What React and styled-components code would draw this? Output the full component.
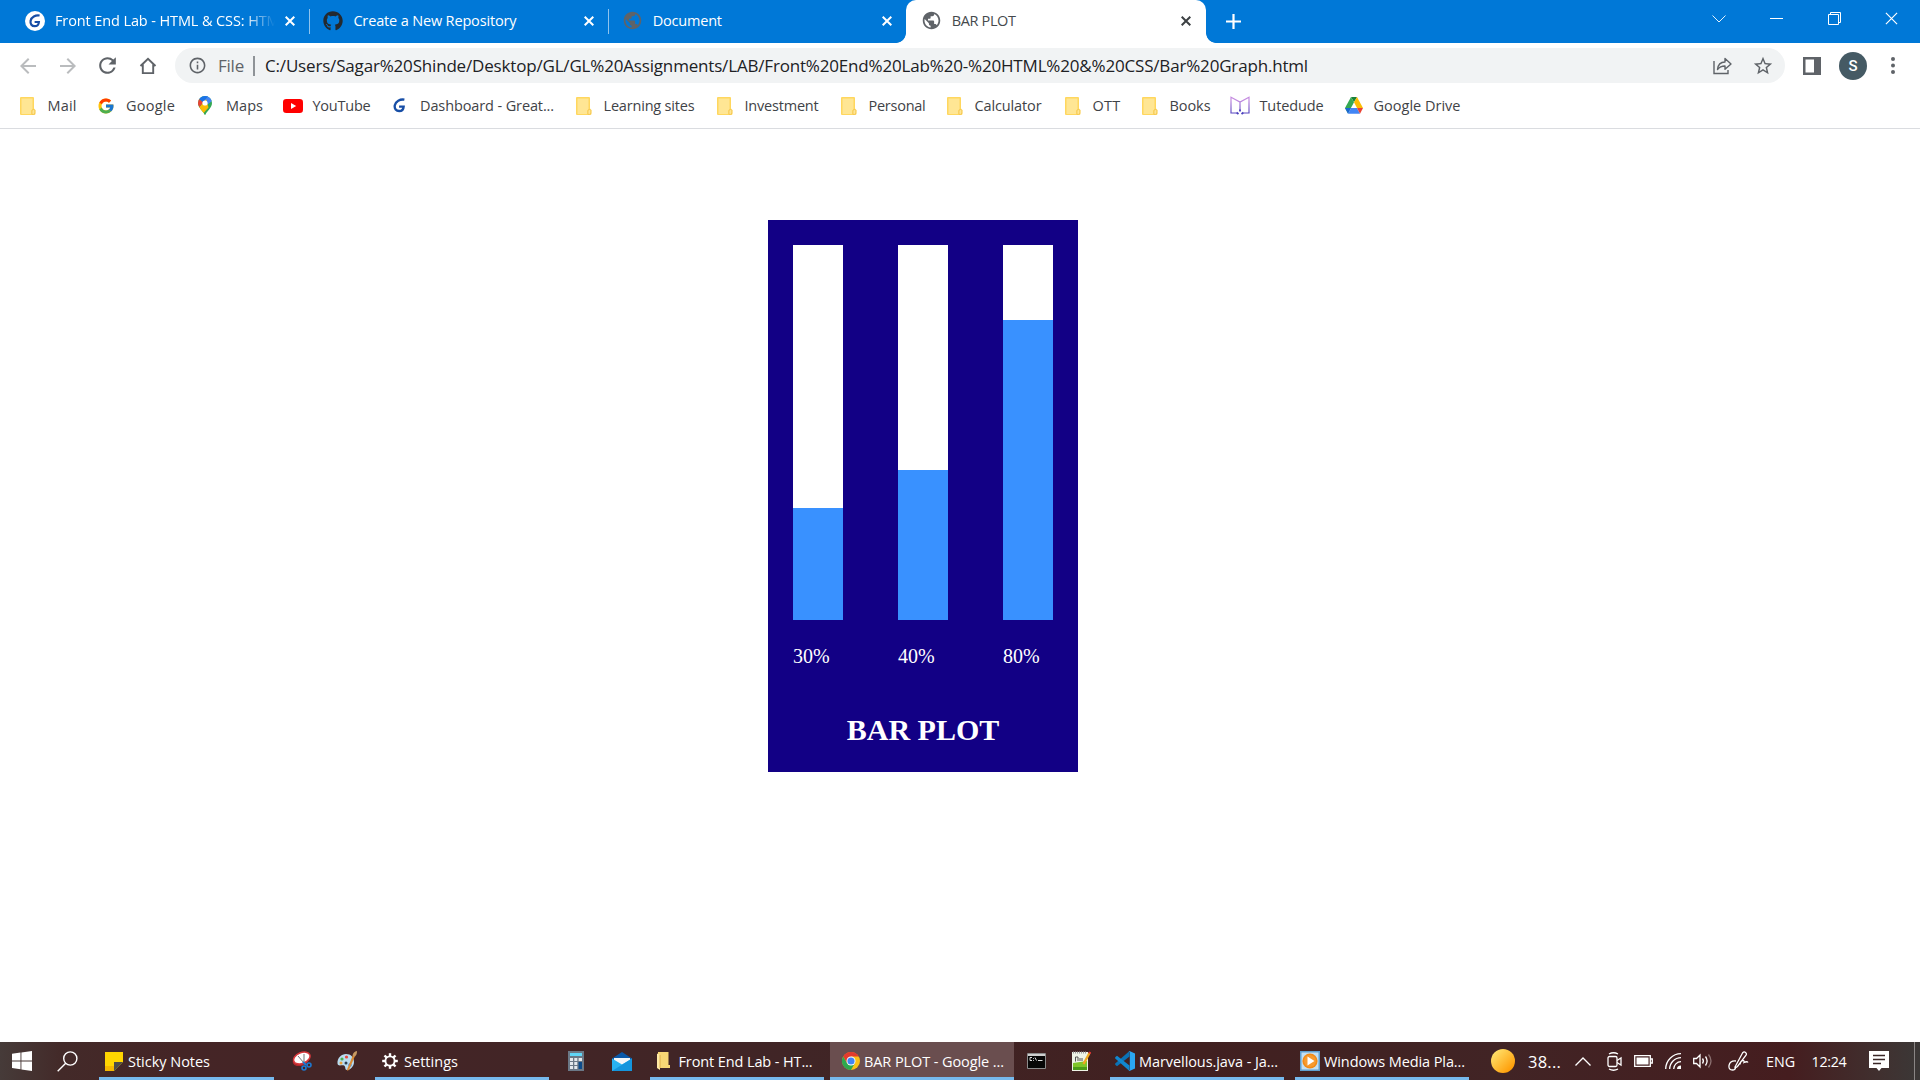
import React, { useLayoutEffect, useRef, useState } from "react";
import styled, { createGlobalStyle, css } from "styled-components";
import { FcGoogle } from "react-icons/fc";
import { FaGithub } from "react-icons/fa";
import { MdPublic, MdArrowBack, MdArrowForward, MdRefresh, MdInfoOutline, MdStarBorder } from "react-icons/md";

const Global = createGlobalStyle`
  * { box-sizing: border-box; }
  html, body { margin: 0; background: #fff; overflow: hidden; }
  svg { display: block; flex: none; }
`;

const Screen = styled.div`
  width: 1920px;
  height: 1080px;
  display: flex;
  flex-direction: column;
  font-family: "Open Sans", "Noto Sans", sans-serif;
  font-stretch: 92%;
  background: #fff;
`;

const Label = styled.span`
  flex: none;
  display: block;
  width: ${(p) => p.$w}px;
  margin-left: ${(p) => p.$ml || 0}px;
  font-size: ${(p) => p.$size || 14.5}px;
  line-height: 20px;
  white-space: nowrap;
  color: ${(p) => p.$color || "inherit"};
`;

/* Spreads the letter spacing so the text fills its column exactly. */
function Fit({ w, children, ...rest }) {
  const ref = useRef(null);
  const [track, setTrack] = useState(0);
  useLayoutEffect(() => {
    const range = document.createRange();
    range.selectNodeContents(ref.current);
    const natural = range.getBoundingClientRect().width - track * children.length;
    setTrack((w - natural) / children.length);
  }, [w, children]);
  return (
    <Label ref={ref} $w={w} {...rest} style={{ letterSpacing: `${track}px` }}>
      {children}
    </Label>
  );
}

/* ---------- Tab strip ---------- */
const TabStrip = styled.header`
  height: 43px;
  flex: none;
  display: flex;
  padding-left: 11px;
  background: #0078d7;
  color: #fff;
`;

const Tab = styled.div`
  position: relative;
  width: 298.4px;
  height: 43px;
  flex: none;
  display: flex;
  align-items: center;
  padding: 0 14px 2px 14px;
  ${(p) => p.$active && css`
    width: 300px;
    background: #fff;
    color: #45494d;
    border-radius: 10px 10px 0 0;
    padding: 0 15px 2px 14.5px;
    &::before, &::after {
      content: "";
      position: absolute;
      bottom: 0;
      width: 10px;
      height: 10px;
    }
    &::before { left: -10px; background: radial-gradient(circle at 0 0, transparent 9.5px, #fff 10.2px); }
    &::after { right: -10px; background: radial-gradient(circle at 100% 0, transparent 9.5px, #fff 10.2px); }
  `}
`;

const TabTitle = styled.div`
  flex: 1;
  min-width: 0;
  margin-left: 10px;
  overflow: hidden;
  ${(p) => p.$fade && css`
    margin-right: 10px;
    mask-image: linear-gradient(90deg, #000 86%, transparent 100%);
  `}
`;

const Divider = styled.i`
  width: 1px;
  height: 25px;
  margin-top: 9px;
  margin-right: -1px;
  flex: none;
  background: #8fc4ee;
`;

const NewTab = styled.div`
  width: 40px;
  margin-left: 7px;
  display: flex;
  align-items: center;
  justify-content: center;
`;

const WindowButtons = styled.div`
  margin-left: auto;
  display: flex;
  height: 37px;
`;

const WindowButton = styled.div`
  width: 57.3px;
  display: flex;
  align-items: center;
  justify-content: center;
`;

/* ---------- Toolbar ---------- */
const Toolbar = styled.div`
  height: 45px;
  flex: none;
  display: flex;
  align-items: center;
  padding-left: 7.5px;
  color: #5f6368;
`;

const ToolButton = styled.div`
  width: ${(p) => p.$w || 40}px;
  height: 40px;
  flex: none;
  display: flex;
  align-items: center;
  justify-content: center;
  color: ${(p) => (p.$off ? "#babcbe" : "#5f6368")};
`;

const Omnibox = styled.div`
  width: 1610px;
  height: 35px;
  flex: none;
  margin-left: 7.5px;
  border-radius: 18px;
  background: #f1f3f4;
  display: flex;
  align-items: center;
  padding: 0 11px 0 13px;
`;

const Pipe = styled.i`
  width: 1.5px;
  height: 20px;
  margin: 0 10.5px 0 9px;
  background: #8f9397;
`;

const OmniActions = styled.div`
  margin-left: auto;
  display: flex;
  align-items: center;
  gap: 20px;
`;

const Avatar = styled.div`
  width: 28px;
  height: 28px;
  flex: none;
  border-radius: 50%;
  background: #455a64;
  color: #fff;
  display: flex;
  align-items: center;
  justify-content: center;
  font: 500 15px/28px Roboto, sans-serif;
`;

/* ---------- Bookmarks ---------- */
const Bookmarks = styled.nav`
  height: 41px;
  flex: none;
  display: flex;
  align-items: center;
  padding: 0 0 5px 18px;
  border-bottom: 1px solid #dadce0;
  color: #3f4347;
`;

const Bookmark = styled.div`
  width: ${(p) => p.$w}px;
  height: 24px;
  flex: none;
  display: flex;
  align-items: center;
`;

const BookmarkIcon = styled.span`
  width: 20px;
  display: flex;
  justify-content: center;
`;

/* ---------- Page ---------- */
const Page = styled.main`
  flex: 1;
  padding: 91px 0 0 768px;
  font-family: "Liberation Serif", "Times New Roman", serif;
`;

const Card = styled.section`
  width: 310px;
  height: 552px;
  padding: 25px;
  background: #120085;
  color: #fff;
`;

const Plot = styled.div`
  display: flex;
  justify-content: space-between;
`;

const Column = styled.div`
  width: 50px;
`;

const Track = styled.div`
  height: 375px;
  display: flex;
  align-items: flex-end;
  background: #fff;
`;

const Fill = styled.div`
  width: 100%;
  height: ${(p) => p.$value}%;
  background: #3991ff;
`;

const Percent = styled.p`
  margin: 25px 0 0;
  font-size: 20px;
  line-height: 23px;
`;

const PlotTitle = styled.h1`
  margin: 45px 0 0;
  text-align: center;
  font-size: 30px;
  line-height: 34px;
  font-weight: bold;
`;

/* ---------- Taskbar ---------- */
const Taskbar = styled.footer`
  height: 38px;
  flex: none;
  display: flex;
  color: #fff;
  background: linear-gradient(90deg, #463b39 0, #432a29 60px, #452526 180px, #402526 800px, #412020 1200px, #412425 1500px, #451d1f 1790px, #40302f 1880px, #3b3837 1920px);
  ${Label} {
    padding-top: 1px;
    line-height: 21px;
  }
`;

const Slot = styled.div`
  width: ${(p) => p.$w}px;
  height: 38px;
  flex: none;
  display: flex;
  align-items: center;
  justify-content: center;
`;

const TaskWindow = styled.div`
  width: ${(p) => p.$w || 174}px;
  height: 38px;
  margin-left: ${(p) => p.$ml || 0}px;
  padding-left: ${(p) => p.$pad || 6}px;
  flex: none;
  display: flex;
  align-items: center;
  background: ${(p) => (p.$active ? "#6a4e4f" : "transparent")};
  box-shadow: inset 0 -3px #76b9ed;
`;

const Tray = styled.div`
  flex: 1;
  display: flex;
  align-items: center;
  padding-left: 22px;
`;

const ShowDesktop = styled.i`
  width: 1px;
  height: 38px;
  margin-left: auto;
  margin-right: 5px;
  background: #8a8685;
`;

/* ---------- Icons ---------- */
const Cross = ({ size = 10, width = 2, color = "currentColor" }) => (
  <svg width={size} height={size} viewBox="0 0 10 10" stroke={color} strokeWidth={width} fill="none">
    <path d="M.7.7l8.6 8.6M9.3.7L.7 9.3" />
  </svg>
);

const GMark = ({ size = 20, disc }) => (
  <svg width={size} height={size} viewBox="0 0 20 20" fill="none">
    {disc && <circle cx="10" cy="10" r="10" fill="#fff" />}
    <g transform={disc ? "" : "translate(-4.2 -4.2) scale(1.42)"}>
      <path d="M14.6 4.5C10.5 3.8 6.3 6 5.6 9.8c-.6 3.2 1.3 5.4 4.1 5.4 2.5 0 4-1.600 4.200-4.200H9.600" stroke="#174ea6" strokeWidth="2.200" />
    </g>
  </svg>
);

const FolderNote = () => (
  <svg width="16" height="18" viewBox="0 0 16 18">
    <path d="M1 0h12q1 0 1 1v10.5l1.5 1.5v3.5q0 1.500-1.500 1.500H1q-1 0-1-1V1q0-1 1-1z" fill="#ffd75e" />
    <path d="M1.500 1.500h11V12l-1.200 1.500v3.500H1.500z" fill="#ffe694" />
    <path d="M12 17.400v-3.400q0-1.500 1.200-1.500t1.600 1v2.500q0 1.400-1.400 1.400z" fill="#ffe694" stroke="#eebb3d" strokeWidth=".6" />
  </svg>
);

const MapsPin = () => (
  <svg width="14" height="19" viewBox="0 0 14 19">
    <defs>
      <clipPath id="pin"><path d="M7 0a7 7 0 0 1 7 7c0 2.600-1.200 4.300-2.700 6.200C9.600 15.300 8.300 16.500 7.700 18.300q-.7 1.400-1.400 0C5.700 16.500 4.400 15.300 2.700 13.200 1.200 11.300 0 9.600 0 7a7 7 0 0 1 7-7z" /></clipPath>
    </defs>
    <g clipPath="url(#pin)">
      <path d="M0 0h14v19H0z" fill="#34a853" />
      <path d="M6 0h8v5L9 9 5 5z" fill="#4285f4" />
      <path d="M-1 12L8.500.5 11 9 3 18z" fill="#fbbc04" transform="translate(-.5 2.500)" />
      <path d="M-1 1.500L5 6.500 11-1H0z" fill="#1a73e8" />
      <path d="M0 2.300L5.200 6.500 1 11.200-1 7z" fill="#ea4335" />
    </g>
    <circle cx="7" cy="7" r="2.600" fill="#fff" />
  </svg>
);

const YouTube = () => (
  <svg width="20" height="14" viewBox="0 0 20 14">
    <rect width="20" height="14" rx="3.300" fill="#f00" />
    <path d="M8 4v6l5.200-3z" fill="#fff" />
  </svg>
);

const OpenBook = () => (
  <svg width="20" height="19" viewBox="0 0 20 19" fill="none" strokeWidth="1.200">
    <defs>
      <linearGradient id="book" gradientUnits="userSpaceOnUse" x1="0" y1="0" x2="0" y2="19">
        <stop offset=".2" stopColor="#c48be0" /><stop offset="1" stopColor="#4a3fbc" />
      </linearGradient>
    </defs>
    <path d="M6.500 17H1V1.200L10 6l9-4.800V17h-5.500M10 6v8.500" stroke="url(#book)" />
    <path d="M6.500 16.500l2 1.500M13.500 16.500l-2 1.500M10 13.500v2" stroke="#4a3fbc" strokeWidth="1.800" />
  </svg>
);

const Drive = () => (
  <svg width="18" height="17" viewBox="0 0 18 17">
    <path d="M6 0h6L9 5.300z" fill="#188038" />
    <path d="M6 0L0 11l3 5.500L9 5.300z" fill="#34a853" />
    <path d="M12 0l6 11h-6L9 5.300z" fill="#fbbc04" />
    <path d="M0 11h6l-3 5.700z" fill="#1967d2" />
    <path d="M6 11h6l3 5.700H3z" fill="#4285f4" />
    <path d="M12 11h6l-3 5.700z" fill="#ea4335" />
  </svg>
);

const HomeIcon = () => (
  <svg width="18" height="18" viewBox="0 0 18 18" fill="none" stroke="currentColor" strokeWidth="1.900">
    <path d="M1.500 9L9 1.800 16.500 9M3.800 7.500v8.600h10.400V7.500" />
  </svg>
);

const ShareIcon = () => (
  <svg width="19" height="19" viewBox="0 0 19 19" fill="none" stroke="#5f6368" strokeWidth="1.400">
    <path d="M1 5v12.500h14V14" />
    <path d="M4.500 13.500C5 8.500 8 6 12 6V2.500l6 5.500-6 5.300V10c-3.500 0-5.700 1-7.500 3.500z" strokeLinejoin="round" />
  </svg>
);

const WindowsLogo = () => (
  <svg width="20" height="20" viewBox="0 0 20 20" fill="#fff">
    <path d="M0 2.800L8.500 1.600v7.900H0zM9.400 1.500L20 0v9.500H9.400zM0 10.400h8.500v7.900L0 17.100zM9.400 10.400H20V20L9.400 18.500z" />
  </svg>
);

const SearchIcon = () => (
  <svg width="21" height="21" viewBox="0 0 21 21" fill="none" stroke="#fff" strokeWidth="1.400">
    <circle cx="13.300" cy="7.500" r="6.600" /><path d="M8.700 12.200L.7 20.300" />
  </svg>
);

const StickyIcon = () => (
  <svg width="18" height="19" viewBox="0 0 18 19">
    <path d="M0 0h18v10l-9 9H0z" fill="#ffd500" /><path d="M0 14h9v5H0z" fill="#f5b800" />
    <path d="M9 10h9l-9 9z" fill="#4b4b4b" />
  </svg>
);

const SnipIcon = () => (
  <svg width="20" height="20" viewBox="0 0 20 20" fill="none">
    <ellipse cx="9" cy="9" rx="8.600" ry="5.600" transform="rotate(-22 9 9)" fill="#b3272b" />
    <ellipse cx="9.800" cy="7" rx="8.600" ry="5.400" transform="rotate(-22 9.800 7)" fill="#fff" stroke="#d8383c" strokeWidth="1.500" />
    <path d="M6 5l6 7M12 3l0 9" stroke="#777" />
    <circle cx="12" cy="17" r="2" stroke="#1e78d0" strokeWidth="1.600" /><circle cx="17" cy="14" r="2" stroke="#1e78d0" strokeWidth="1.600" />
    <path d="M11 11l3 3" stroke="#1e78d0" strokeWidth="2" />
  </svg>
);

const PaintIcon = () => (
  <svg width="20" height="20" viewBox="0 0 20 20">
    <path d="M9 3c5 0 8 3.500 8 8s-4 8-7 8c-2.500 0-1-3.500-3-4.500S1 16 .5 12.500C0 7 4.500 3 9 3z" fill="#b9dcf0" />
    <circle cx="5" cy="8" r="1.600" fill="#4caf50" /><circle cx="9.500" cy="6" r="1.600" fill="#e5483a" />
    <circle cx="4" cy="12" r="1.500" fill="#e9a13b" /><circle cx="9" cy="12" r="1.500" fill="#2c3e50" /><circle cx="13" cy="14" r="1.700" fill="#3b7dd8" />
    <path d="M16 4l2 1-6 14-2 .8.300-2z" fill="#d98b35" /><path d="M15.500 4.500C16 2 17.500.5 20 0c0 2.500-.5 4-2 5.500z" fill="#c79a62" />
  </svg>
);

const Gear = () => (
  <svg width="16" height="16" viewBox="0 0 16 16" stroke="#fff" fill="none">
    <circle cx="8" cy="8" r="4.600" strokeWidth="1.900" />
    {[0, 45, 90, 135, 180, 225, 270, 315].map((a) => (
      <path key={a} d="M8 .2v2.800" strokeWidth="2.400" transform={`rotate(${a} 8 8)`} />
    ))}
  </svg>
);

const CalcIcon = () => (
  <svg width="16" height="20" viewBox="0 0 16 20">
    <path d="M0 0h16v20H0z" fill="#6b7886" /><path d="M2 2h12v3H2z" fill="#5fd6f7" />
    <path d="M2 7h3v3H2zm4.300 0h3v3h-3zM10.600 7h3.400v3h-3.400zM2 11h3v3H2zm4.300 0h3v3h-3zM2 15h3v3H2zm4.300 0h3v3h-3z" fill="#e4e8ec" />
    <path d="M10.600 11H14v7h-3.400z" fill="#0d4c8c" />
  </svg>
);

const MailIcon = () => (
  <svg width="20" height="19" viewBox="0 0 20 19">
    <path d="M0 6.500L10 0l10 6.500v5H0z" fill="#0a58a8" /><path d="M2 6h16v8H2z" fill="#f4f6f8" />
    <path d="M0 6.500l10 6 10-6V19H0z" fill="#29b3f2" /><path d="M0 19l20-12.500V19z" fill="#1495dd" />
  </svg>
);

const FolderIcon = () => (
  <svg width="13" height="18" viewBox="0 0 13 18">
    <path d="M1 0h10.500v13H13v3H1z" fill="#f8d775" /><path d="M0 1.500l3 1.500v15l-3-2z" fill="#ffeaa5" /><path d="M3 3v13" stroke="#dcae48" />
  </svg>
);

const ChromeIcon = () => (
  <svg width="18" height="18" viewBox="0 0 18 18">
    <circle cx="9" cy="9" r="9" fill="#fbc116" />
    <path d="M1.200 4.500A9 9 0 0 1 16.800 4.500H9L5.100 11.250z" fill="#e33b2e" />
    <path d="M1.200 4.500A9 9 0 0 0 9 18l3.900-6.750H5.100z" fill="#2da94f" />
    <circle cx="9" cy="9" r="4.500" fill="#fff" /><circle cx="9" cy="9" r="3.600" fill="#4285f4" />
  </svg>
);

const CmdIcon = () => (
  <svg width="19" height="16" viewBox="0 0 19 16" fill="none">
    <path d="M.5.5h18v15H.5z" fill="#070707" stroke="#8c8c8c" /><path d="M1 1h17v2H1z" fill="#cfcfcf" />
    <path d="M5 4.500H3v3h2M6.500 5v.8M6.500 7v.8M8 4.500l1.500 3M11 7.500h4.500" stroke="#ddd" />
  </svg>
);

const NotepadIcon = () => (
  <svg width="19" height="20" viewBox="0 0 19 20" fill="none">
    <path d="M0 1h16v19H0z" fill="#eef4e6" /><path d="M1 12l14-2v9H1z" fill="#7fc629" /><path d="M1 16h14v3H1z" fill="#4b9c18" />
    <path d="M1 1.500h14" stroke="#999" strokeDasharray="1 1" strokeWidth="2" /><path d="M3.500 10.500V6h2.500v4M8 7v3M10 7v3" stroke="#444" strokeWidth=".9" />
    <path d="M17.500 2l-6 11" stroke="#f0a820" strokeWidth="2.400" /><path d="M18.300 1l-.8 1.500" stroke="#d33" strokeWidth="2.400" />
  </svg>
);

const CodeIcon = () => (
  <svg width="20" height="20" viewBox="0 0 20 20">
    <path d="M14.500 0v5.500L2 15.200.2 13.700V12.500z" fill="#0b72b5" /><path d="M.2 7.500V6.300L2 4.800l12.500 9.700V20z" fill="#1187cf" />
    <path d="M14.500 0L20 2.500v15L14.500 20l-1-.6c.7.300 1.300-.2 1.300-.9v-17c0-.7-.6-1.200-1.300-.9z" fill="#2ba7f2" />
  </svg>
);

const MediaIcon = () => (
  <svg width="20" height="20" viewBox="0 0 20 20">
    <path d="M0 0h20v20H0z" fill="#5e9fd0" /><path d="M1.500 1.500h17v17h-17z" fill="#c4dff2" />
    <circle cx="10" cy="10" r="7.600" fill="#f28a16" /><circle cx="10" cy="10" r="6" fill="#f79a30" /><path d="M7.500 5.500v9L14.500 10z" fill="#fff" />
  </svg>
);

const Sun = () => (
  <svg width="24" height="24" viewBox="0 0 24 24">
    <defs><linearGradient id="sun" x1="0" y1="0" x2="1" y2="1"><stop offset=".1" stopColor="#ffe36e" /><stop offset=".9" stopColor="#ff9800" /></linearGradient></defs>
    <circle cx="12" cy="12" r="12" fill="url(#sun)" />
  </svg>
);

const TrayIcon = styled.svg.attrs({ fill: "none", stroke: "#fff", strokeWidth: 1.3 })`
  margin-left: ${(p) => p.$ml}px;
`;

const TABS = [
  { icon: <GMark disc />, title: "Front End Lab - HTML & CSS: HTML", w: 232, fade: true },
  { icon: <FaGithub size={20} color="#24292e" />, title: "Create a New Repository", w: 163 },
  { icon: <MdPublic size={21} color="#5f6368" />, title: "Document", w: 69 },
  { icon: <MdPublic size={21} color="#5f6368" />, title: "BAR PLOT", w: 64, active: true },
];

const BOOKMARKS = [
  { icon: <FolderNote />, text: "Mail", w: 78, tw: 29 },
  { icon: <FcGoogle size={18} />, text: "Google", w: 99, tw: 49, gap: 10 },
  { icon: <MapsPin />, text: "Maps", w: 88, tw: 37, gap: 11 },
  { icon: <YouTube />, text: "YouTube", w: 106, tw: 58 },
  { icon: <GMark size={15} />, text: "Dashboard - Great...", w: 185, tw: 134, gap: 11 },
  { icon: <FolderNote />, text: "Learning sites", w: 141, tw: 91 },
  { icon: <FolderNote />, text: "Investment", w: 124, tw: 74 },
  { icon: <FolderNote />, text: "Personal", w: 106, tw: 57 },
  { icon: <FolderNote />, text: "Calculator", w: 118, tw: 67 },
  { icon: <FolderNote />, text: "OTT", w: 77, tw: 28 },
  { icon: <FolderNote />, text: "Books", w: 90, tw: 41 },
  { icon: <OpenBook />, text: "Tutedude", w: 114, tw: 64 },
  { icon: <Drive />, text: "Google Drive", w: 140, tw: 87 },
];

const BARS = [30, 40, 80];

export default function App() {
  return (
    <Screen>
      <Global />
      <TabStrip>
        {TABS.map((t, i) => (
          <React.Fragment key={t.title}>
            <Tab $active={t.active}>
              {t.icon}
              <TabTitle $fade={t.fade}><Fit w={t.w}>{t.title}</Fit></TabTitle>
              <Cross color={t.active ? "#3c4043" : "#fff"} />
            </Tab>
            {i < 2 && <Divider />}
          </React.Fragment>
        ))}
        <NewTab>
          <svg width="15" height="15" viewBox="0 0 15 15" stroke="#fff" strokeWidth="2.200"><path d="M7.500 0v15M0 7.500h15" /></svg>
        </NewTab>
        <WindowButtons>
          <WindowButton><svg width="14" height="8" viewBox="0 0 14 8" fill="none" stroke="#fff" strokeWidth=".9"><path d="M.5.5L7 7 13.500.5" /></svg></WindowButton>
          <WindowButton><svg width="13" height="1" viewBox="0 0 13 1"><path d="M0 0h13v1H0z" fill="#fff" /></svg></WindowButton>
          <WindowButton><svg width="13" height="13" viewBox="0 0 13 13" fill="none" stroke="#fff"><path d="M.5 2.500h10v10H.5zM2.500 2.500v-2h10v10h-2" /></svg></WindowButton>
          <WindowButton><Cross size={13} width={0.9} color="#fff" /></WindowButton>
        </WindowButtons>
      </TabStrip>

      <Toolbar>
        <ToolButton $off><MdArrowBack size={24} /></ToolButton>
        <ToolButton $off><MdArrowForward size={24} /></ToolButton>
        <ToolButton><MdRefresh size={25} /></ToolButton>
        <ToolButton><HomeIcon /></ToolButton>
        <Omnibox>
          <MdInfoOutline size={19} />
          <Fit w={26} $ml={11} $size={17}>File</Fit>
          <Pipe />
          <Fit w={1043} $size={17} $color="#202124">
            C:/Users/Sagar%20Shinde/Desktop/GL/GL%20Assignments/LAB/Front%20End%20Lab%20-%20HTML%20&%20CSS/Bar%20Graph.html
          </Fit>
          <OmniActions><ShareIcon /><MdStarBorder size={22} /></OmniActions>
        </Omnibox>
        <ToolButton $w={54}>
          <svg width="18" height="18" viewBox="0 0 18 18"><path d="M0 0h18v18H0zM2.500 2.500v13H11v-13z" fill="#5f6368" fillRule="evenodd" /></svg>
        </ToolButton>
        <Avatar>S</Avatar>
        <ToolButton $w={51}>
          <svg width="4" height="17" viewBox="0 0 4 17" fill="#5f6368"><circle cx="2" cy="2" r="2" /><circle cx="2" cy="8.500" r="2" /><circle cx="2" cy="15" r="2" /></svg>
        </ToolButton>
      </Toolbar>

      <Bookmarks>
        {BOOKMARKS.map((b) => (
          <Bookmark key={b.text} $w={b.w}>
            <BookmarkIcon>{b.icon}</BookmarkIcon>
            <Fit w={b.tw} $ml={b.gap || 9.500}>{b.text}</Fit>
          </Bookmark>
        ))}
      </Bookmarks>

      <Page>
        <Card>
          <Plot>
            {BARS.map((v) => (
              <Column key={v}>
                <Track><Fill $value={v} /></Track>
                <Percent>{v}%</Percent>
              </Column>
            ))}
          </Plot>
          <PlotTitle>BAR PLOT</PlotTitle>
        </Card>
      </Page>

      <Taskbar>
        <Slot $w={44}><WindowsLogo /></Slot>
        <Slot $w={47}><SearchIcon /></Slot>
        <TaskWindow $w={175} $ml={8}><StickyIcon /><Fit w={82} $ml={5}>Sticky Notes</Fit></TaskWindow>
        <Slot $w={56}><SnipIcon /></Slot>
        <Slot $w={33}><PaintIcon /></Slot>
        <TaskWindow $ml={12} $pad={7}><Gear /><Fit w={54} $ml={6}>Settings</Fit></TaskWindow>
        <Slot $w={54}><CalcIcon /></Slot>
        <Slot $w={37}><MailIcon /></Slot>
        <TaskWindow $ml={10} $pad={7}><FolderIcon /><Fit w={134} $ml={8.500}>Front End Lab - HT...</Fit></TaskWindow>
        <TaskWindow $w={184} $ml={6} $pad={12} $active><ChromeIcon /><Fit w={140} $ml={4}>BAR PLOT - Google ...</Fit></TaskWindow>
        <Slot $w={45}><CmdIcon /></Slot>
        <Slot $w={45}><NotepadIcon /></Slot>
        <TaskWindow $ml={6} $pad={5}><CodeIcon /><Fit w={139} $ml={4}>Marvellous.java - Ja...</Fit></TaskWindow>
        <TaskWindow $ml={11} $pad={5}><MediaIcon /><Fit w={141} $ml={4}>Windows Media Pla...</Fit></TaskWindow>
        <Tray>
          <Sun />
          <Fit w={33} $ml={13} $size={16.500}>38...</Fit>
          <TrayIcon $ml={14} width="16" height="9" viewBox="0 0 16 9"><path d="M.5 8.500L8 1l7.500 7.500" /></TrayIcon>
          <TrayIcon $ml={16} width="15" height="19" viewBox="0 0 15 19">
            <rect x="1" y="4.500" width="9" height="10" rx="1.500" /><path d="M10 8.500l4-2.500v7l-4-2.500M2 2q4.500-2.500 9 0M2 17q4.500 2.500 9 0" />
          </TrayIcon>
          <TrayIcon $ml={12} width="19" height="12" viewBox="0 0 19 12">
            <path d="M.7.7h15.600v10.600H.7zM16.500 4h1.800v4h-1.800" /><path d="M2.500 2.500h12v7h-12z" fill="#fff" stroke="none" />
          </TrayIcon>
          <TrayIcon $ml={12} width="17" height="17" viewBox="0 0 17 17">
            <path d="M.7 16A15.300 15.300 0 0 1 16 .7M4.700 16A11.300 11.300 0 0 1 16 4.700M8.700 16A7.300 7.300 0 0 1 16 8.700M12 16" /><path d="M12 16q0-3.500 4-3.500V16z" fill="#fff" stroke="none" />
          </TrayIcon>
          <TrayIcon $ml={11} width="21" height="16" viewBox="0 0 21 16">
            <path d="M.7 5.500h2.800L7 2v12L3.500 10.500H.7zM9.500 5.500q1.800 2.500 0 5M12.500 3.500q3.200 4.500 0 9" /><path d="M15.500 1.500q5 6.500 0 13" stroke="#8b7070" />
          </TrayIcon>
          <TrayIcon $ml={14} width="21" height="20" viewBox="0 0 21 20">
            <path d="M7 16L14.500 2q1.500-1.800 3-.6t.5 2.800L9.500 15.500 7 17zM8 10q-6-.5-7 4.500-.5 4.500 3.500 4.500 3 0 3-2.500M12 13.500q.5-4 3-4 1.500 0 1 2 3-1.500 4 0" />
          </TrayIcon>
          <Fit w={29} $ml={17} $size={14.300}>ENG</Fit>
          <Fit w={35} $ml={16.500} $size={14.300}>12:24</Fit>
          <TrayIcon $ml={22} width="20" height="20" viewBox="0 0 20 20">
            <path d="M0 0h20v17h-7.500L10 20l-2.500-3H0z" fill="#fff" stroke="none" /><path d="M4 4.500h12M4 8.500h12M4 12.500h8" stroke="#3a2626" />
          </TrayIcon>
          <ShowDesktop />
        </Tray>
      </Taskbar>
    </Screen>
  );
}
